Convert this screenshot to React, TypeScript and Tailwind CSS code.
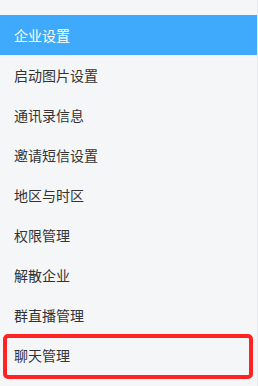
import React from 'react';

const items = [
  '企业设置',
  '启动图片设置',
  '通讯录信息',
  '邀请短信设置',
  '地区与时区',
  '权限管理',
  '解散企业',
  '群直播管理',
  '聊天管理',
];

export default function App() {
  return (
    <div
      className="w-[258px] h-[386px] bg-[#f5f6f8] border-r border-[#e8e9ec] pt-[15px] overflow-hidden"
      style={{ fontFamily: '"Noto Sans CJK SC", "Noto Sans", sans-serif' }}
    >
      <ul className="flex flex-col">
        {items.map((label, i) => (
          <li
            key={label}
            className={
              i === 0
                ? 'relative h-[40px] flex items-center pl-[14px] text-[14px] text-white bg-[#3fa9fc]'
                : 'relative h-[40px] flex items-center pl-[14px] text-[14px] text-[#333]'
            }
          >
            {label}
            {i === items.length - 1 && (
              <span className="absolute left-[3px] right-[4px] top-[-1px] bottom-[-4px] border-[4px] border-[#ff2323] rounded-[5px]" />
            )}
          </li>
        ))}
      </ul>
    </div>
  );
}
